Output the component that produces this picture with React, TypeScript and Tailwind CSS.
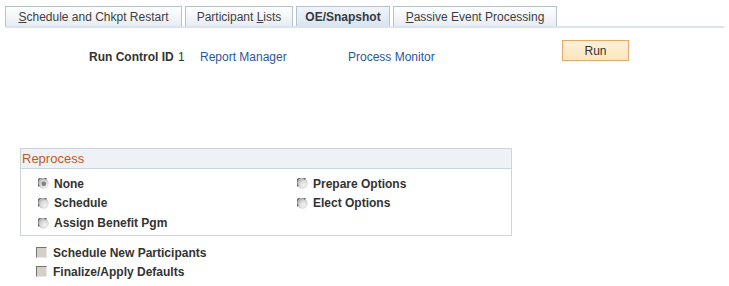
import React from "react";

function Radio({ checked }: { checked?: boolean }) {
  return (
    <svg width="11" height="11" viewBox="0 0 11 11" className="shrink-0">
      <defs>
        <radialGradient id="rg" cx="0.62" cy="0.66" r="0.62">
          <stop offset="0" stopColor="#f4f4f4" />
          <stop offset="0.7" stopColor="#d6d6d6" />
          <stop offset="1" stopColor="#b4b4b4" />
        </radialGradient>
      </defs>
      <circle cx="5.5" cy="5.5" r="5.2" fill="url(#rg)" />
      <path d="M1.2 8.2 A5 5 0 0 1 8.4 1.1" fill="none" stroke="#666" strokeWidth="1.5" />
      {checked && <circle cx="5.8" cy="5.8" r="2.4" fill="#828282" />}
    </svg>
  );
}

function Check() {
  return (
    <span className="block w-[11px] h-[11px] shrink-0 bg-[#d4d0c8] border-t border-l border-t-[#747474] border-l-[#747474] border-b border-r border-b-[#e8e6e2] border-r-[#e8e6e2]" />
  );
}

export default function App() {
  const tabBase =
    "h-[20px] flex items-center justify-center border border-b-0 border-[#b7c1ce] text-[12px] leading-[14px]";
  return (
    <div className="w-[729px] h-[286px] bg-white font-['Liberation_Sans',Arial,sans-serif] text-[#333]">
      <div className="pt-[6px] pl-[5px] pr-[5px]">
        <div className="flex gap-[3px]">
          <div className={`${tabBase} w-[177px] bg-gradient-to-b from-white to-[#e8ecf1] text-[#3f3f3f]`}>
            <span>
              <span className="underline">S</span>chedule and Chkpt Restart
            </span>
          </div>
          <div className={`${tabBase} w-[108px] bg-gradient-to-b from-white to-[#e8ecf1] text-[#3f3f3f]`}>
            <span>
              Participant <span className="underline">L</span>ists
            </span>
          </div>
          <div className={`${tabBase} w-[94px] bg-gradient-to-b from-[#f1f5fa] to-[#d9e4f2] font-bold text-[#3a3a3a]`}>
            OE/Snapshot
          </div>
          <div className={`${tabBase} w-[164px] bg-gradient-to-b from-white to-[#e8ecf1] text-[#3f3f3f]`}>
            <span>
              <span className="underline">P</span>assive Event Processing
            </span>
          </div>
        </div>
        <div className="h-[2px] bg-[#d9e4f2]" />
      </div>

      <div className="mt-[12px] flex items-start h-[21px]">
        <div className="flex items-center mt-[10px] pl-[89px] text-[12px] leading-[14px]">
          <span className="w-[89px] font-bold text-[#333]">Run Control ID</span>
          <span className="w-[22px] text-[#333]">1</span>
          <span className="w-[148px] text-[#2a56a0]">Report Manager</span>
          <span className="w-[214px] text-[#2a56a0]">Process Monitor</span>
        </div>
        <button className="w-[67px] h-[21px] border border-[#e2a86c] bg-gradient-to-b from-[#fdf0d8] to-[#fbe6bd] text-[12px] leading-[14px] text-[#333]">
          Run
        </button>
      </div>

      <div className="mt-[87px] ml-[20px] w-[492px] h-[88px] border border-[#cdd4dc]">
        <div className="h-[20px] flex items-center pl-[1px] bg-[#eef2f6] border-b border-[#cdd4dc] text-[13px] leading-[15px] text-[#c05a1e]">
          Reprocess
        </div>
        <div className="grid grid-cols-[259px_1fr] pl-[17px] pt-[5px] text-[12px] font-bold text-[#333]">
          <div className="flex flex-col">
            <div className="h-[19px] flex items-center gap-[5px]">
              <Radio checked />
              <span>None</span>
            </div>
            <div className="h-[20px] flex items-center gap-[5px]">
              <Radio />
              <span>Schedule</span>
            </div>
            <div className="h-[20px] flex items-center gap-[5px]">
              <Radio />
              <span>Assign Benefit Pgm</span>
            </div>
          </div>
          <div className="flex flex-col">
            <div className="h-[19px] flex items-center gap-[5px]">
              <Radio />
              <span>Prepare Options</span>
            </div>
            <div className="h-[20px] flex items-center gap-[5px]">
              <Radio />
              <span>Elect Options</span>
            </div>
          </div>
        </div>
      </div>

      <div className="mt-[7px] ml-[36px] text-[12px] font-bold text-[#333]">
        <div className="h-[19px] flex items-center gap-[6px]">
          <Check />
          <span>Schedule New Participants</span>
        </div>
        <div className="h-[19px] flex items-center gap-[6px]">
          <Check />
          <span>Finalize/Apply Defaults</span>
        </div>
      </div>
    </div>
  );
}
